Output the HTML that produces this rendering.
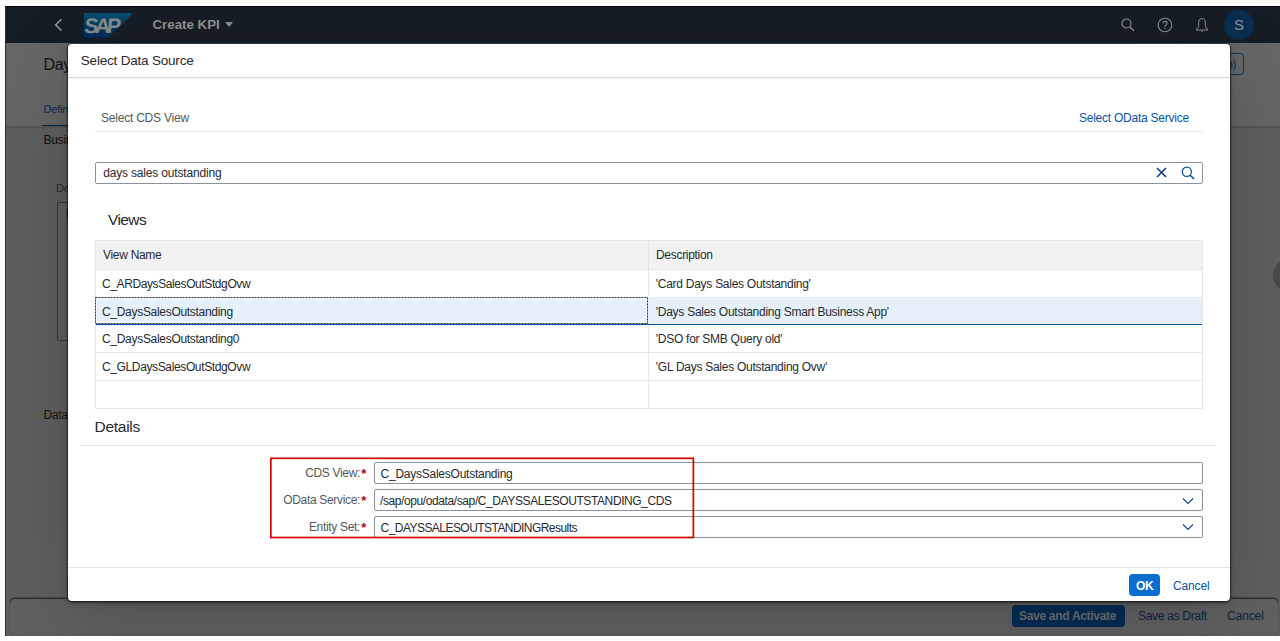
<!DOCTYPE html>
<html><head><meta charset="utf-8">
<style>
*{box-sizing:border-box;margin:0;padding:0}
html,body{width:1280px;height:641px;overflow:hidden;background:#fff;font-family:"Liberation Sans",sans-serif}
.a{position:absolute;white-space:nowrap}
#win{position:absolute;left:5px;top:6px;width:1275px;height:630px;background:#5f5f5f;overflow:hidden}
#shell{position:absolute;left:0;top:0;width:1275px;height:37px;background:#171d26}
.t12{font-size:12px;letter-spacing:-0.3px}
#dlg{position:absolute;left:63px;top:38px;width:1162px;height:557px;background:#fff;border-radius:4px;box-shadow:0 0 0 1px rgba(0,0,0,.3), 0 1px 2px 1px rgba(0,0,0,.4), 0 20px 80px rgba(0,0,0,.18), 0 2px 8px rgba(0,0,0,.15)}
.line{position:absolute;height:1px;background:#e5e5e5}
.inp{position:absolute;background:#fff;border:1px solid #8c949c;border-radius:2px}
</style></head><body>
<div id="win">

  <!-- background page (dimmed) ; coords relative to win (5,6) -->
  <div class="a" style="left:0;top:37px;width:1275px;height:83px;background:#666"></div>
  <div class="a" style="left:38.5px;top:51px;font-size:16px;line-height:16px;color:#121212;letter-spacing:-0.3px">Days Sales Outstanding</div>
  <div class="a" style="left:38.5px;top:98px;font-size:11px;line-height:11px;color:#062a4e;letter-spacing:-0.2px">Definition</div>
  <div class="a" style="left:37px;top:119px;width:80px;height:2px;background:#042449"></div>
  <div class="a" style="left:0;top:120px;width:1275px;height:1px;background:#565656;box-shadow:0 1px 1px rgba(0,0,0,.12)"></div>
  <div class="a" style="left:38.5px;top:128px;font-size:12px;line-height:12px;color:#121212;letter-spacing:-0.3px">Business</div>
  <div class="a" style="left:51px;top:177px;font-size:11px;line-height:11px;color:#2a2b2c;letter-spacing:-0.2px">Description</div>
  <div class="a" style="left:52px;top:196px;width:200px;height:139px;border:1px solid #38393b;border-radius:1px"></div>
  <div class="a" style="left:61px;top:203px;font-size:11px;line-height:11px;color:#121212">D</div>
  <div class="a" style="left:38.5px;top:403px;font-size:12px;line-height:12px;color:#121212;letter-spacing:-0.3px">Data</div>
  <div class="a" style="left:1211px;top:46.5px;width:28px;height:22px;border:1.5px solid #173552;border-radius:4px"></div>
  <svg class="a" style="left:1220px;top:53px" width="14" height="12" viewBox="0 0 14 12"><path d="M6 2.5 Q8 6 6 9.5" fill="none" stroke="#173552" stroke-width="1.4"/><path d="M8.5 0.5 Q12 6 8.5 11.5" fill="none" stroke="#173552" stroke-width="1.2"/></svg>
  <div class="a" style="left:1268px;top:253px;width:33px;height:33px;border-radius:50%;background:#484b4e"></div>
  <!-- footer bar -->
  <div class="a" style="left:5px;top:593px;width:1268px;height:35px;border-radius:5px;background:#616161;box-shadow:0 -1px 0 #2e2e2e, 0 -2px 1px rgba(0,0,0,.25), 0 0 1px #2a2a2a"></div>
  <div class="a" style="left:1007px;top:599px;width:113px;height:22px;border-radius:4px;background:#042c54"></div>
  <div class="a" style="left:1014px;top:604px;font-size:12px;line-height:12px;color:#6c6e70;font-weight:700;letter-spacing:-0.3px">Save and Activate</div>
  <div class="a" style="left:1133px;top:604px;font-size:12px;line-height:12px;color:#0c2540;letter-spacing:-0.3px">Save as Draft</div>
  <div class="a" style="left:1222px;top:604px;font-size:12px;line-height:12px;color:#0c2540;letter-spacing:-0.1px">Cancel</div>
  <div id="shell">
    <!-- back chevron -->
    <svg class="a" style="left:48px;top:11px" width="10" height="15" viewBox="0 0 10 15"><path d="M8.4 2.3 L2.6 7.9 L8.4 13.5" fill="none" stroke="#939ba3" stroke-width="1.5"/></svg>
    <!-- SAP logo -->
    <svg class="a" style="left:79px;top:7px" width="50" height="25" viewBox="0 0 50 25">
      <defs><linearGradient id="lg" x1="0" y1="0" x2="0" y2="1"><stop offset="0" stop-color="#03506f"/><stop offset="1" stop-color="#032955"/></linearGradient></defs>
      <path d="M0 0 H49 L24.5 25 H0 Z" fill="url(#lg)"/>
      <text x="0" y="20.4" font-family="Liberation Sans" font-weight="700" font-size="21" fill="#8a8a8a" letter-spacing="-3.4" transform="skewX(-6) translate(2,0)">SAP</text>
    </svg>
    <div class="a" style="left:147.5px;top:10.5px;font-size:13.3px;font-weight:700;color:#909090">Create KPI</div>
    <svg class="a" style="left:220px;top:16px" width="8" height="6" viewBox="0 0 8 6"><path d="M0 0 H8 L4 5 Z" fill="#8a8f96"/></svg>
    <!-- right icons -->
    <svg class="a" style="left:1116px;top:12px" width="14" height="14" viewBox="0 0 14 14"><circle cx="5.5" cy="5.5" r="4.5" fill="none" stroke="#8a8f96" stroke-width="1.2"/><path d="M8.7 8.7 L12.8 12.8" stroke="#8a8f96" stroke-width="1.4"/></svg>
    <svg class="a" style="left:1152px;top:11px" width="16" height="16" viewBox="0 0 16 16"><circle cx="8" cy="8" r="6.8" fill="none" stroke="#8a8f96" stroke-width="1.1"/><text x="8" y="11.6" text-anchor="middle" font-family="Liberation Sans" font-size="10" font-weight="400" fill="#9a9fa6">?</text></svg>
    <svg class="a" style="left:1190px;top:11px" width="15" height="17" viewBox="0 0 15 17"><path d="M7 1.5 C4.6 1.5 3.7 3.4 3.7 5.8 V9.3 L1 13 H13 L10.3 9.3 V5.8 C10.3 3.4 9.4 1.5 7 1.5 Z" fill="none" stroke="#8a8f96" stroke-width="1"/><path d="M5.9 13.6 Q7 15.3 8.1 13.6" fill="none" stroke="#8a8f96" stroke-width="1"/></svg>
    <div class="a" style="left:1219px;top:4px;width:30px;height:30px;border-radius:50%;background:#0b2d50;color:#8f9398;font-size:15px;text-align:center;line-height:30px">S</div>
  </div>

<div id="dlg">
<div class="a" style="left:12.8px;top:9.9px;font-size:13.5px;line-height:13.5px;color:#272a2d;letter-spacing:-0.2px;font-weight:400;">Select Data Source</div>
<div class="a" style="left:0px;top:33px;width:1162px;height:1px;background:#dadada;box-shadow:0 1px 2px rgba(0,0,0,.06)"></div>
<div class="a" style="left:33.0px;top:68.2px;font-size:12px;line-height:12px;color:#54575a;letter-spacing:-0.22px;font-weight:400;">Select CDS View</div>
<div class="a" style="left:1011.0px;top:68.3px;font-size:12px;line-height:12px;color:#0854a0;letter-spacing:-0.24px;font-weight:400;">Select OData Service</div>
<div class="a" style="left:27px;top:87px;width:1107px;height:1px;background:#e5e5e5"></div>
<div class="a" style="left:27px;top:118px;width:1108px;height:22px;background:#fff;border:1px solid #89919a;border-radius:2px"></div>
<div class="a" style="left:35.2px;top:122.8px;font-size:12px;line-height:12px;color:#272a2d;letter-spacing:-0.17px;font-weight:400;">days sales outstanding</div>
<svg class="a" style="left:1088px;top:123px" width="11" height="11" viewBox="0 0 11 11"><path d="M1 1 L10 10 M10 1 L1 10" stroke="#0b3f7d" stroke-width="1.6"/></svg>
<svg class="a" style="left:1113px;top:122px" width="14" height="14" viewBox="0 0 14 14"><circle cx="5.8" cy="5.8" r="4.6" fill="none" stroke="#0b4a8d" stroke-width="1.2"/><path d="M9.2 9.2 L13 13" stroke="#0b4a8d" stroke-width="1.6"/></svg>
<div class="a" style="left:40.0px;top:167.9px;font-size:15.5px;line-height:15.5px;color:#272a2d;letter-spacing:-0.6px;font-weight:400;">Views</div>
<div class="a" style="left:27px;top:196px;width:1108px;height:169px;background:#fff;border:1px solid #e5e5e5"></div>
<div class="a" style="left:28px;top:197px;width:1106px;height:28px;background:#f2f2f2"></div>
<div class="a" style="left:28px;top:225px;width:1106px;height:1px;background:#e5e5e5"></div>
<div class="a" style="left:28px;top:253px;width:1106px;height:1px;background:#e5e5e5"></div>
<div class="a" style="left:28px;top:308px;width:1106px;height:1px;background:#e5e5e5"></div>
<div class="a" style="left:28px;top:336px;width:1106px;height:1px;background:#e5e5e5"></div>
<div class="a" style="left:580px;top:197px;width:1px;height:167px;background:#e5e5e5"></div>
<div class="a" style="left:28px;top:253px;width:1106px;height:28px;background:#e5f0fa"></div>
<div class="a" style="left:28px;top:280px;width:1106px;height:1px;background:#0854a0"></div>
<svg class="a" style="left:27px;top:253px" width="554" height="28"><rect x="0.5" y="0.5" width="552" height="26" fill="none" stroke="#26303a" stroke-width="1" stroke-dasharray="2 1"/><rect x="1.5" y="1.5" width="550" height="24" fill="none" stroke="#f4f8fc" stroke-width="1"/></svg>
<div class="a" style="left:35.0px;top:205.3px;font-size:12px;line-height:12px;color:#272a2d;letter-spacing:-0.3px;font-weight:400;">View Name</div>
<div class="a" style="left:588.0px;top:205.3px;font-size:12px;line-height:12px;color:#272a2d;letter-spacing:-0.3px;font-weight:400;">Description</div>
<div class="a" style="left:34.0px;top:234.3px;font-size:12px;line-height:12px;color:#272a2d;letter-spacing:-0.4px;font-weight:400;">C_ARDaysSalesOutStdgOvw</div>
<div class="a" style="left:587.8px;top:234.3px;font-size:12px;line-height:12px;color:#272a2d;letter-spacing:-0.27px;font-weight:400;">'Card Days Sales Outstanding'</div>
<div class="a" style="left:34.0px;top:261.8px;font-size:12px;line-height:12px;color:#272a2d;letter-spacing:-0.3px;font-weight:400;">C_DaysSalesOutstanding</div>
<div class="a" style="left:587.8px;top:261.8px;font-size:12px;line-height:12px;color:#272a2d;letter-spacing:-0.27px;font-weight:400;">'Days Sales Outstanding Smart Business App'</div>
<div class="a" style="left:34.0px;top:289.3px;font-size:12px;line-height:12px;color:#272a2d;letter-spacing:-0.3px;font-weight:400;">C_DaysSalesOutstanding0</div>
<div class="a" style="left:587.8px;top:289.3px;font-size:12px;line-height:12px;color:#272a2d;letter-spacing:-0.27px;font-weight:400;">'DSO for SMB Query old'</div>
<div class="a" style="left:34.0px;top:316.8px;font-size:12px;line-height:12px;color:#272a2d;letter-spacing:-0.37px;font-weight:400;">C_GLDaysSalesOutStdgOvw</div>
<div class="a" style="left:587.8px;top:316.8px;font-size:12px;line-height:12px;color:#272a2d;letter-spacing:-0.27px;font-weight:400;">'GL Days Sales Outstanding Ovw'</div>
<div class="a" style="left:26.6px;top:375.4px;font-size:15.5px;line-height:15.5px;color:#272a2d;letter-spacing:-0.3px;font-weight:400;">Details</div>
<div class="a" style="left:13px;top:401px;width:1135px;height:1px;background:#e5e5e5"></div>
<div class="a" style="left:92px;top:423.4px;width:200px;text-align:right;font-size:12px;line-height:12px;color:#54575a;letter-spacing:-0.33px">CDS View:</div>
<div class="a" style="left:293.3px;top:423.4px;font-size:13px;line-height:13px;color:#c00010;letter-spacing:0px;font-weight:700;">*</div>
<div class="a" style="left:92px;top:450.4px;width:200px;text-align:right;font-size:12px;line-height:12px;color:#54575a;letter-spacing:-0.33px">OData Service:</div>
<div class="a" style="left:293.3px;top:450.4px;font-size:13px;line-height:13px;color:#c00010;letter-spacing:0px;font-weight:700;">*</div>
<div class="a" style="left:92px;top:477.4px;width:200px;text-align:right;font-size:12px;line-height:12px;color:#54575a;letter-spacing:-0.33px">Entity Set:</div>
<div class="a" style="left:293.3px;top:477.4px;font-size:13px;line-height:13px;color:#c00010;letter-spacing:0px;font-weight:700;">*</div>
<div class="a" style="left:306px;top:418px;width:829px;height:22px;background:#fff;border:1px solid #89919a;border-radius:2px"></div>
<div class="a" style="left:306px;top:445px;width:829px;height:22px;background:#fff;border:1px solid #89919a;border-radius:2px"></div>
<div class="a" style="left:306px;top:472px;width:829px;height:22px;background:#fff;border:1px solid #89919a;border-radius:2px"></div>
<div class="a" style="left:312.6px;top:423.9px;font-size:12px;line-height:12px;color:#272a2d;letter-spacing:-0.25px;font-weight:400;">C_DaysSalesOutstanding</div>
<div class="a" style="left:312.0px;top:450.9px;font-size:12px;line-height:12px;color:#272a2d;letter-spacing:-0.4px;font-weight:400;">/sap/opu/odata/sap/C_DAYSSALESOUTSTANDING_CDS</div>
<div class="a" style="left:312.6px;top:477.9px;font-size:12px;line-height:12px;color:#272a2d;letter-spacing:-0.55px;font-weight:400;">C_DAYSSALESOUTSTANDINGResults</div>
<svg class="a" style="left:1114px;top:452.7px" width="12" height="8" viewBox="0 0 12 8"><path d="M1 1.5 L6 6.5 L11 1.5" fill="none" stroke="#0b4a8d" stroke-width="1.2"/></svg>
<svg class="a" style="left:1114px;top:479.3px" width="12" height="8" viewBox="0 0 12 8"><path d="M1 1.5 L6 6.5 L11 1.5" fill="none" stroke="#0b4a8d" stroke-width="1.2"/></svg>
<svg class="a" style="left:202px;top:413px" width="425" height="83"><rect x="0.85" y="1.3" width="422.5" height="79.2" fill="none" stroke="#d80000" stroke-width="1.7"/></svg>
<div class="a" style="left:0px;top:523px;width:1162px;height:1px;background:#e5e5e5"></div>
<div class="a" style="left:1061px;top:530px;width:31px;height:22px;background:#0a6ed1;border-radius:4px"></div>
<div class="a" style="left:1068.0px;top:535.5px;font-size:12px;line-height:12px;color:#fff;letter-spacing:-0.4px;font-weight:700;">OK</div>
<div class="a" style="left:1105.0px;top:535.5px;font-size:12px;line-height:12px;color:#0854a0;letter-spacing:-0.15px;font-weight:400;">Cancel</div>
</div>
<div class="a" style="left:0;top:0;width:1px;height:630px;background:#2e2e2e"></div>
<div class="a" style="left:0;top:0;width:1275px;height:1px;background:#05070b"></div>
</div>
</body></html>
